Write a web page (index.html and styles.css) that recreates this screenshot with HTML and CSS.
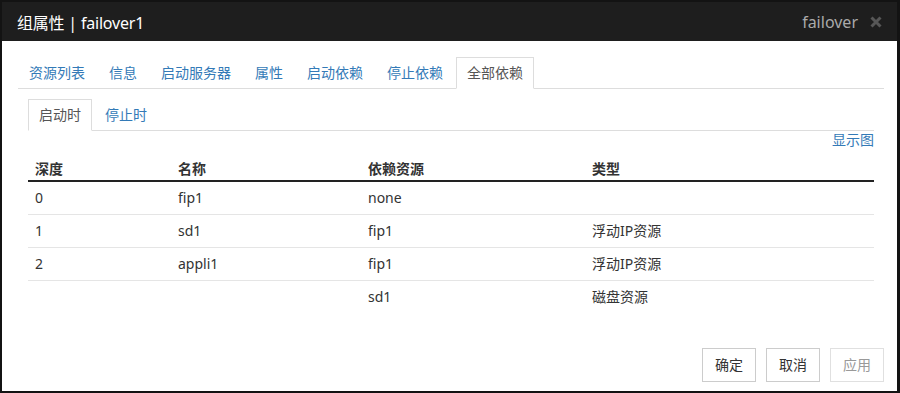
FILE: index.html
```html
<!DOCTYPE html>
<html lang="zh">
<head>
<meta charset="UTF-8">
<title>组属性 | failover1</title>
<link rel="stylesheet" href="styles.css">
</head>
<body>
    <div class="modal">
        <div class="modal-header">
            <span class="title">组属性 | failover1</span>
            <div class="header-right">
                <span class="group-name">failover</span>
                <svg class="close" width="12" height="12" viewBox="0 0 12 12">
                    <path d="M1.5 1.5 L10.5 10.5 M10.5 1.5 L1.5 10.5" stroke="#575757" stroke-width="3"/>
                </svg>
            </div>
        </div>

        <div class="modal-body">
            <!-- 主标签 -->
            <ul class="tabs">
                <li><a href="#">资源列表</a></li>
                <li><a href="#">信息</a></li>
                <li><a href="#">启动服务器</a></li>
                <li><a href="#">属性</a></li>
                <li><a href="#">启动依赖</a></li>
                <li><a href="#">停止依赖</a></li>
                <li class="active"><a href="#">全部依赖</a></li>
            </ul>

            <div class="sub-panel">
                <ul class="tabs">
                    <li class="active"><a href="#">启动时</a></li>
                    <li><a href="#">停止时</a></li>
                </ul>

                <div class="graph-link"><a href="#">显示图</a></div>

                <table class="dep-table">
                    <colgroup>
                        <col class="c-depth">
                        <col class="c-name">
                        <col class="c-dep">
                        <col class="c-type">
                    </colgroup>
                    <thead>
                        <tr><th>深度</th><th>名称</th><th>依赖资源</th><th>类型</th></tr>
                    </thead>
                    <tbody>
                        <tr><td>0</td><td>fip1</td><td>none</td><td></td></tr>
                        <tr><td>1</td><td>sd1</td><td>fip1</td><td>浮动IP资源</td></tr>
                        <tr><td>2</td><td>appli1</td><td>fip1</td><td>浮动IP资源</td></tr>
                        <tr class="last"><td></td><td></td><td>sd1</td><td>磁盘资源</td></tr>
                    </tbody>
                </table>
            </div>
        </div>

        <div class="modal-footer">
            <button>确定</button>
            <button>取消</button>
            <button class="disabled" disabled>应用</button>
        </div>
    </div>
</body>
</html>
```

FILE: styles.css
```css
body {
    margin: 0;
    background: #131313;
    font-family: "Noto Sans", "Noto Sans CJK SC", sans-serif;
    font-size: 14px;
    color: #333;
}
a {
    color: #337ab7;
    text-decoration: none;
}
.modal {
    margin: 2px 3px 2px 2px;
    height: 389px;
    background: #fff;
    display: flex;
    flex-direction: column;
}
.modal-header {
    height: 39px;
    background: #1e1e1e;
    padding: 0 15px 0 15px;
    display: flex;
    justify-content: space-between;
    align-items: center;
}
.title {
    color: #fff;
    font-size: 16px;
    letter-spacing: -0.2px;
}
.header-right {
    display: flex;
    align-items: center;
    gap: 12px;
}
.group-name {
    color: #aaa;
    font-size: 16px;
}
.close {
    display: block;
    margin-top: 1px;
}
.modal-body {
    padding: 16px 13px 0 16px;
}
.tabs {
    list-style: none;
    margin: 0;
    padding: 0;
    display: flex;
    border-bottom: 1px solid #ddd;
}
.tabs li {
    margin-right: 2px;
    margin-bottom: -1px;
}
.tabs li a {
    display: block;
    padding: 5px 10px;
    line-height: 20px;
    border: 1px solid transparent;
}
.tabs li.active a {
    color: #555;
    background: #fff;
    border-color: #ddd #ddd transparent #ddd;
}
.sub-panel {
    padding: 10px 10px 0 10px;
}
.graph-link {
    text-align: right;
    line-height: 18px;
}
.dep-table {
    width: 100%;
    border-collapse: collapse;
    table-layout: fixed;
    margin-top: 4px;
}
.c-depth { width: 143px; }
.c-name { width: 190px; }
.c-dep { width: 224px; }
.dep-table th {
    text-align: left;
    font-weight: bold;
    color: #333;
    padding: 6px 7px 1px 7px;
    line-height: 20px;
    border-bottom: 2px solid #222;
}
.dep-table td {
    padding: 6px 7px;
    line-height: 20px;
    border-bottom: 1px solid #e5e5e5;
}
.dep-table tr.last td {
    border-bottom: none;
}
.modal-footer {
    margin-top: auto;
    padding: 0 13px 9px 0;
    display: flex;
    justify-content: flex-end;
    gap: 10px;
}
.modal-footer button {
    font-family: inherit;
    font-size: 14px;
    line-height: 20px;
    padding: 6px 12px;
    color: #333;
    background: #fff;
    border: 1px solid #ccc;
    border-radius: 0;
}
.modal-footer button.disabled {
    color: #999;
    border-color: #e0e0e0;
}
```
